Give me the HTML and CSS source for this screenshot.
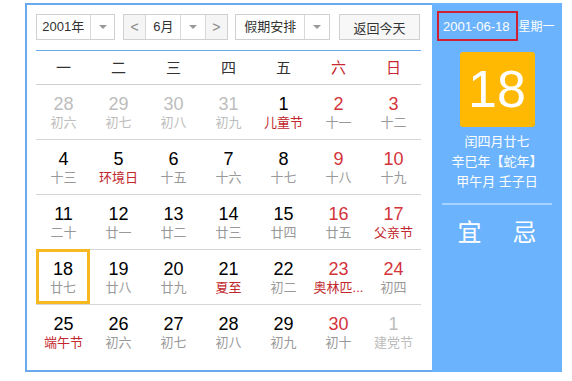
FILE: index.html
```html
<!DOCTYPE html>
<html lang="zh-CN">
<head>
    <meta charset="UTF-8">
    <meta name="viewport" content="width=device-width, initial-scale=1.0">
    <title>万年历</title>

    <link rel="stylesheet" href="styles.css">

</head>
<body>

    <div class="calendar">
        <div class="calendar__main">
            <div class="calendar__toolbar">
                <div class="calendar__select calendar__select--year">
                    <span class="calendar__select-text">2001年</span>
                    <span class="calendar__arrow"></span>
                </div>
                <div class="calendar__select calendar__select--month">
                    <span class="calendar__step">&lt;</span>
                    <span class="calendar__select-text">6月</span>
                    <span class="calendar__arrow"></span>
                    <span class="calendar__step">&gt;</span>
                </div>
                <div class="calendar__select calendar__select--holiday">
                    <span class="calendar__select-text">假期安排</span>
                    <span class="calendar__arrow"></span>
                </div>
                <button class="calendar__today">返回今天</button>
            </div>

            <div class="calendar__weekdays">
                <div>一</div>
                <div>二</div>
                <div>三</div>
                <div>四</div>
                <div>五</div>
                <div class="calendar__weekend">六</div>
                <div class="calendar__weekend">日</div>
            </div>

            <div class="calendar__week">
                <div class="calendar__day calendar__day--other"><span class="calendar__num">28</span><span class="calendar__lunar">初六</span></div>
                <div class="calendar__day calendar__day--other"><span class="calendar__num">29</span><span class="calendar__lunar">初七</span></div>
                <div class="calendar__day calendar__day--other"><span class="calendar__num">30</span><span class="calendar__lunar">初八</span></div>
                <div class="calendar__day calendar__day--other"><span class="calendar__num">31</span><span class="calendar__lunar">初九</span></div>
                <div class="calendar__day calendar__day--fest"><span class="calendar__num">1</span><span class="calendar__lunar">儿童节</span></div>
                <div class="calendar__day calendar__day--weekend"><span class="calendar__num">2</span><span class="calendar__lunar">十一</span></div>
                <div class="calendar__day calendar__day--weekend"><span class="calendar__num">3</span><span class="calendar__lunar">十二</span></div>
            </div>
            <div class="calendar__week">
                <div class="calendar__day"><span class="calendar__num">4</span><span class="calendar__lunar">十三</span></div>
                <div class="calendar__day calendar__day--fest"><span class="calendar__num">5</span><span class="calendar__lunar">环境日</span></div>
                <div class="calendar__day"><span class="calendar__num">6</span><span class="calendar__lunar">十五</span></div>
                <div class="calendar__day"><span class="calendar__num">7</span><span class="calendar__lunar">十六</span></div>
                <div class="calendar__day"><span class="calendar__num">8</span><span class="calendar__lunar">十七</span></div>
                <div class="calendar__day calendar__day--weekend"><span class="calendar__num">9</span><span class="calendar__lunar">十八</span></div>
                <div class="calendar__day calendar__day--weekend"><span class="calendar__num">10</span><span class="calendar__lunar">十九</span></div>
            </div>
            <div class="calendar__week">
                <div class="calendar__day"><span class="calendar__num">11</span><span class="calendar__lunar">二十</span></div>
                <div class="calendar__day"><span class="calendar__num">12</span><span class="calendar__lunar">廿一</span></div>
                <div class="calendar__day"><span class="calendar__num">13</span><span class="calendar__lunar">廿二</span></div>
                <div class="calendar__day"><span class="calendar__num">14</span><span class="calendar__lunar">廿三</span></div>
                <div class="calendar__day"><span class="calendar__num">15</span><span class="calendar__lunar">廿四</span></div>
                <div class="calendar__day calendar__day--weekend"><span class="calendar__num">16</span><span class="calendar__lunar">廿五</span></div>
                <div class="calendar__day calendar__day--weekend calendar__day--fest"><span class="calendar__num">17</span><span class="calendar__lunar">父亲节</span></div>
            </div>
            <div class="calendar__week">
                <div class="calendar__day calendar__day--selected"><span class="calendar__num">18</span><span class="calendar__lunar">廿七</span></div>
                <div class="calendar__day"><span class="calendar__num">19</span><span class="calendar__lunar">廿八</span></div>
                <div class="calendar__day"><span class="calendar__num">20</span><span class="calendar__lunar">廿九</span></div>
                <div class="calendar__day calendar__day--fest"><span class="calendar__num">21</span><span class="calendar__lunar">夏至</span></div>
                <div class="calendar__day"><span class="calendar__num">22</span><span class="calendar__lunar">初二</span></div>
                <div class="calendar__day calendar__day--weekend calendar__day--fest"><span class="calendar__num">23</span><span class="calendar__lunar">奥林匹...</span></div>
                <div class="calendar__day calendar__day--weekend"><span class="calendar__num">24</span><span class="calendar__lunar">初四</span></div>
            </div>
            <div class="calendar__week">
                <div class="calendar__day calendar__day--fest"><span class="calendar__num">25</span><span class="calendar__lunar">端午节</span></div>
                <div class="calendar__day"><span class="calendar__num">26</span><span class="calendar__lunar">初六</span></div>
                <div class="calendar__day"><span class="calendar__num">27</span><span class="calendar__lunar">初七</span></div>
                <div class="calendar__day"><span class="calendar__num">28</span><span class="calendar__lunar">初八</span></div>
                <div class="calendar__day"><span class="calendar__num">29</span><span class="calendar__lunar">初九</span></div>
                <div class="calendar__day calendar__day--weekend"><span class="calendar__num">30</span><span class="calendar__lunar">初十</span></div>
                <div class="calendar__day calendar__day--other"><span class="calendar__num">1</span><span class="calendar__lunar">建党节</span></div>
            </div>
        </div>

        <div class="calendar__side">
            <div class="calendar__date"><span class="calendar__date-mark">2001-06-18</span><span class="calendar__weekday">星期一</span></div>
            <div class="calendar__big-day">18</div>
            <div class="calendar__lunar-info">
                <div>闰四月廿七</div>
                <div>辛巳年【蛇年】</div>
                <div>甲午月 壬子日</div>
            </div>
            <div class="calendar__divider"></div>
            <div class="calendar__advice">
                <span>宜</span>
                <span>忌</span>
            </div>
        </div>
    </div>

</body>
</html>
```

FILE: styles.css
```css
body {
    margin: 0;
    background: #fff;
    font-family: "Liberation Sans", "Noto Sans CJK SC", sans-serif;
}

.calendar {
    display: flex;
    width: 537px;
    height: 369px;
    margin: 3px 0 0 25px;
}

.calendar__main {
    width: 385px;
    padding: 9px 11px 11px 9px;
    border: 2px solid #69aaee;
    border-right: none;
}

/* barra de cima: selects e botao */
.calendar__toolbar {
    display: flex;
    height: 26px;
    padding-bottom: 10px;
    border-bottom: 1px solid #69aaee;
}

.calendar__select {
    display: flex;
    height: 24px;
    border: 1px solid #d0d0d0;
    font-size: 13px;
    color: #333;
    line-height: 24px;
}

.calendar__select--year {
    width: 77px;
}

.calendar__select--year .calendar__select-text {
    width: 54px;
}

.calendar__select--month {
    width: 103px;
    margin-left: 8px;
}

.calendar__select--month .calendar__select-text {
    width: 35px;
    border-left: 1px solid #d8d8d8;
}

.calendar__select--holiday {
    width: 93px;
    margin-left: 7px;
}

.calendar__select--holiday .calendar__select-text {
    width: 69px;
}

.calendar__select-text {
    text-align: center;
}

.calendar__arrow {
    width: 24px;
    border-left: 1px solid #d8d8d8;
    position: relative;
}

.calendar__arrow::after {
    content: "";
    position: absolute;
    left: 8px;
    top: 10px;
    border-left: 4px solid transparent;
    border-right: 4px solid transparent;
    border-top: 4px solid #999;
}

.calendar__step {
    width: 22px;
    background: #f5f5f5;
    color: #888;
    text-align: center;
    font-size: 14px;
}

.calendar__step:last-child {
    border-left: 1px solid #d8d8d8;
}

.calendar__today {
    width: 81px;
    height: 26px;
    margin-left: 9px;
    padding: 0;
    border: 1px solid #d0d0d0;
    background: #f7f7f7;
    font-family: inherit;
    font-size: 13px;
    color: #333;
}

.calendar__weekdays {
    display: grid;
    grid-template-columns: repeat(7, 55px);
    height: 33px;
    border-bottom: 1px solid #cfcfcf;
    font-size: 15px;
    line-height: 33px;
    text-align: center;
    color: #333;
}

.calendar__weekend {
    color: #c8282e;
}

.calendar__week {
    display: grid;
    grid-template-columns: repeat(7, 55px);
    height: 54px;
    border-bottom: 1px solid #d6d6d6;
}

.calendar__week:last-child {
    border-bottom: none;
}

.calendar__day {
    display: flex;
    flex-direction: column;
    align-items: center;
    padding-top: 9px;
    box-sizing: border-box;
}

.calendar__num {
    font-size: 18px;
    line-height: 21px;
    color: #000;
}

.calendar__lunar {
    font-size: 13px;
    line-height: 16px;
    color: #999;
    white-space: nowrap;
}

.calendar__day--weekend .calendar__num {
    color: #d4333c;
}

.calendar__day--fest .calendar__lunar {
    color: #c1272d;
}

.calendar__day--other .calendar__num,
.calendar__day--other .calendar__lunar {
    color: #bdbdbd;
}

.calendar__day--selected {
    width: 54px;
    margin-top: -1px;
    padding-top: 7px;
    border: 3px solid #f7b821;
}

/* painel azul da direita */
.calendar__side {
    width: 130px;
    background: #6cb3fd;
    color: #fff;
    display: flex;
    flex-direction: column;
    align-items: center;
    padding-top: 8px;
}

.calendar__date {
    align-self: flex-start;
    display: flex;
    align-items: center;
    margin-left: 5px;
    font-size: 13px;
    line-height: 14px;
    white-space: nowrap;
}

.calendar__date-mark {
    padding: 7px 6px 5px 4px;
    border: 2px solid #cf2034;
}

.calendar__weekday {
    margin-left: 1px;
    padding-top: 2px;
    font-size: 12px;
}

.calendar__big-day {
    width: 75px;
    height: 75px;
    margin-top: 11px;
    background: #ffb902;
    border-radius: 3px;
    font-size: 52px;
    line-height: 75px;
    text-align: center;
}

.calendar__lunar-info {
    margin-top: 5px;
    font-size: 13px;
    line-height: 20px;
    text-align: center;
}

.calendar__divider {
    width: 110px;
    height: 2px;
    margin-top: 11px;
    background: #a6d2ff;
}

.calendar__advice {
    display: flex;
    gap: 31px;
    margin-top: 13px;
    font-size: 24px;
    line-height: 30px;
}
```
